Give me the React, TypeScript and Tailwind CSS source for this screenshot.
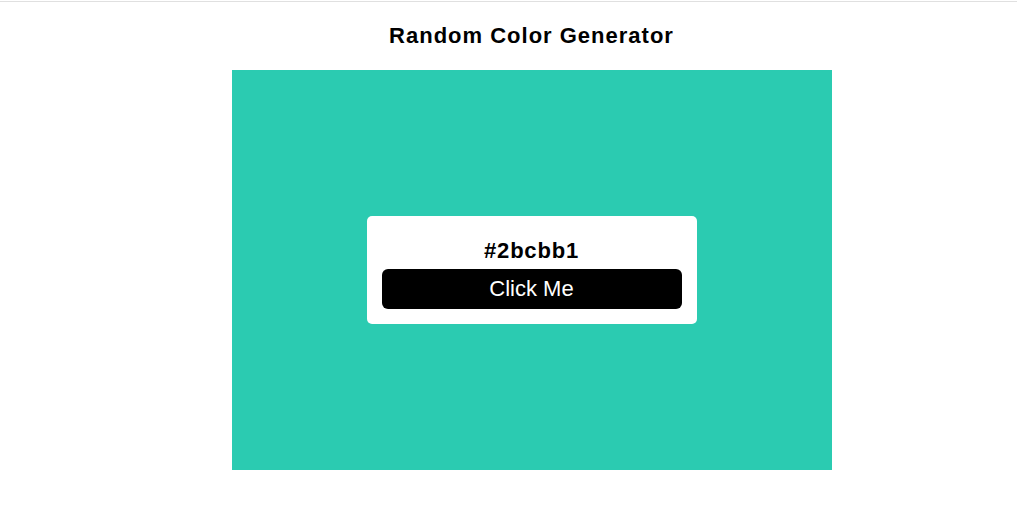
import React, { useState } from "react";

export default function App() {
  const [color, setColor] = useState("#2bcbb1");

  const randomColor = () => {
    const hex = Math.floor(Math.random() * 0xffffff)
      .toString(16)
      .padStart(6, "0");
    setColor(`#${hex}`);
  };

  return (
    <div className="min-h-screen bg-white pt-px font-['Liberation_Sans',Arial,sans-serif] text-black">
      <div className="border-t border-[#e0e0e0] pl-[46px]">
        {/* Title */}
        <h1 className="pt-[21px] text-center text-[22px] font-bold leading-[25px] tracking-[1px]">
          Random Color Generator
        </h1>

        {/* Color box */}
        <div
          className="mx-auto mt-[22px] flex h-[400px] w-[600px] items-center justify-center"
          style={{ backgroundColor: color }}
        >
          <div className="flex w-[330px] flex-col items-center rounded-[5px] bg-white px-[15px] pb-[15px] pt-[22px]">
            <h3 className="text-[22px] font-bold leading-[25px] tracking-[0.8px]">{color}</h3>
            <button
              onClick={randomColor}
              className="mt-[6px] h-[40px] w-[300px] rounded-[6px] bg-black text-[22px] leading-[24px] text-white"
            >
              Click Me
            </button>
          </div>
        </div>
      </div>
    </div>
  );
}
